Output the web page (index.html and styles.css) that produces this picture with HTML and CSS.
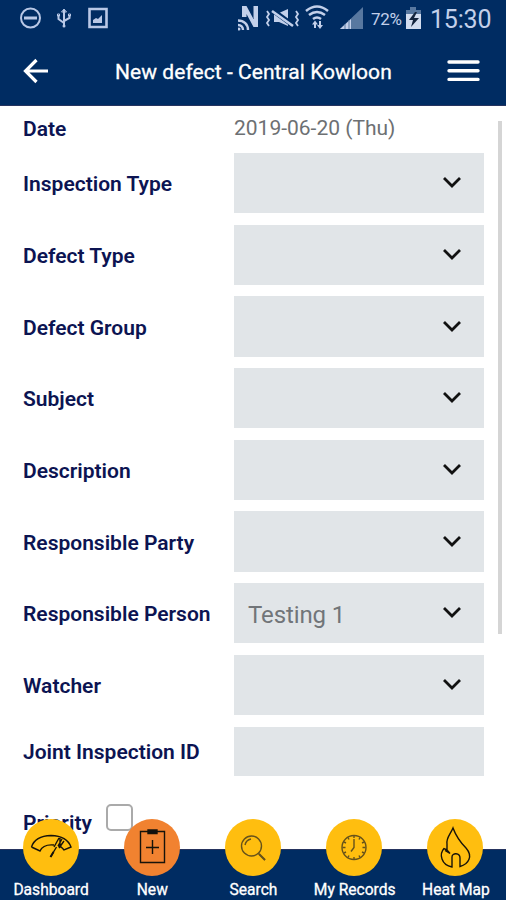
FILE: index.html
```html
<!DOCTYPE html>
<html lang="en">
<head>
<meta charset="utf-8">
<title>New defect</title>
<link rel="stylesheet" href="styles.css">
</head>
<body>
<div class="app">
  <header class="header">
    <div class="status">
      <svg class="status-left" width="90" height="36" viewBox="0 0 90 36" fill="none" stroke="#b9c8e6" stroke-width="2">
        <circle cx="10.5" cy="18" r="9.5"/><path d="M4 18h13" stroke-width="3"/>
        <path d="M44 10v17M38.500 15v4l5.500 4M49.500 15v3l-5.500 3"/><path d="M41.500 12l2.500-3 2.500 3zM37.500 14h2v2h-2zM48.500 14h2v2h-2z" stroke-width="1"/><circle cx="44" cy="26" r="1.500" fill="#b9c8e6" stroke="none"/>
        <path d="M69.500 9h17v18h-17z" stroke-width="2.600"/><path d="M73 23v-3l3-2 2 1 4-4v8z" fill="#b9c8e6" stroke="none"/>
      </svg>
      <svg class="status-right" width="128" height="36" viewBox="0 0 128 36" fill="none" stroke="#c3d0ea">
        <path d="M4 17V6h4.500l7 13V6h4.500v21h-4.500L8.500 14v3z" fill="#c3d0ea" stroke="none"/>
        <path d="M0 20.500c6 0 10 4 10 9.500M0 25c3 0 5 2 5 5" stroke-width="2.400"/><circle cx="1" cy="29" r="1.500" fill="#c3d0ea" stroke="none"/>
        <path d="M36 13h5l9-4v17l-9-4h-5z" fill="#c3d0ea" stroke="none"/>
        <path d="M33 9l23 17" stroke="#002c62" stroke-width="5"/><path d="M34 11l21 15" stroke-width="2.600"/>
        <path d="M29 11l2 3-2 3 2 3-2 3 2 3M58 11l2 3-2 3 2 3-2 3 2 3" stroke-width="1.800"/>
        <path d="M68 11q11-9 22 0M71 15q8-6 16 0M75 19q4-3 8 0" stroke-width="2.500"/>
        <path d="M77 28v-6M82 21v6" stroke-width="2"/><path d="M74 24.500l3-4 3 4zM79 25l3 4 3-4z" fill="#c3d0ea" stroke="none"/>
        <path d="M125 7v22h-23z" fill="#5878a0" stroke="none"/><path d="M102 29l11-10v10z" fill="#c3d0ea" stroke="none"/><path d="M107 24v5M111 20v9" stroke="#5878a0"/>
      </svg>
      <span class="battery-text">72%</span>
      <svg class="battery" width="15" height="22" viewBox="0 0 15 22"><path d="M4 0h6v3h5v4H0V3h4z" fill="#5878a0"/><path d="M0 7h15v15H0z" fill="#d3ddef"/><path d="M9 5l-6 8h4l-2 7 8-9H8l3-6z" fill="#14243d"/></svg>
      <span class="clock">15:30</span>
    </div>
    <div class="toolbar">
      <svg class="back" width="26" height="26" viewBox="0 0 26 26" fill="none" stroke="#fff" stroke-width="3.200"><path d="M13.500 2L2.500 13l11 11M2.500 13H25"/></svg>
      <h1 class="title">New defect - Central Kowloon</h1>
      <svg class="menu" width="33" height="22" viewBox="0 0 33 22" stroke="#fff" stroke-width="3.400" stroke-linecap="round"><path d="M2 2h29M2 10.700h29M2 19.400h29"/></svg>
    </div>
  </header>
  <main class="form">
    <div class="row date"><span class="label">Date</span><span class="value">2019-06-20 (Thu)</span></div>
    <div class="row"><span class="label">Inspection Type</span><div class="field"><svg class="chev" viewBox="0 0 20 13"><path d="M2 2l8 8 8-8"/></svg></div></div>
    <div class="row"><span class="label">Defect Type</span><div class="field"><svg class="chev" viewBox="0 0 20 13"><path d="M2 2l8 8 8-8"/></svg></div></div>
    <div class="row"><span class="label">Defect Group</span><div class="field"><svg class="chev" viewBox="0 0 20 13"><path d="M2 2l8 8 8-8"/></svg></div></div>
    <div class="row"><span class="label">Subject</span><div class="field"><svg class="chev" viewBox="0 0 20 13"><path d="M2 2l8 8 8-8"/></svg></div></div>
    <div class="row"><span class="label">Description</span><div class="field"><svg class="chev" viewBox="0 0 20 13"><path d="M2 2l8 8 8-8"/></svg></div></div>
    <div class="row"><span class="label">Responsible Party</span><div class="field"><svg class="chev" viewBox="0 0 20 13"><path d="M2 2l8 8 8-8"/></svg></div></div>
    <div class="row"><span class="label">Responsible Person</span><div class="field"><span class="picked">Testing 1</span><svg class="chev" viewBox="0 0 20 13"><path d="M2 2l8 8 8-8"/></svg></div></div>
    <div class="row"><span class="label">Watcher</span><div class="field"><svg class="chev" viewBox="0 0 20 13"><path d="M2 2l8 8 8-8"/></svg></div></div>
    <div class="row short"><span class="label">Joint Inspection ID</span><div class="field"></div></div>
    <div class="row priority"><span class="label">Priority</span><span class="check"></span></div>
    <div class="scrollbar"></div>
  </main>
  <nav class="nav">
    <div class="tab"><div class="dot"><svg width="56" height="56" viewBox="0 0 56 56"><path d="M8.500 28Q12 17 28 16.500Q44 17 48 28L41 31Q38 27 35 27M8.500 28L17 32Q20 25 31 26M36 19L31 28M39 20L35 27M27.500 38l6-10M37 19v9M41 22l-5 7"/><path d="M27.500 38l3-5" stroke-width="2"/></svg></div><span>Dashboard</span></div>
    <div class="tab active"><div class="dot"><svg width="56" height="56" viewBox="0 0 56 56"><path d="M16.500 12.500h24v31h-24zM28.500 21v14M22 28.500h13"/><path d="M24 11h9v3.500h-9z" fill="#111"/></svg></div><span>New</span></div>
    <div class="tab"><div class="dot light"><svg width="56" height="56" viewBox="0 0 56 56"><circle cx="26.500" cy="27" r="10"/><path d="M20 26q1-5 6-6M33.500 34.500l6.500 6.500"/><path d="M34 35l6 6" stroke-width="2"/></svg></div><span>Search</span></div>
    <div class="tab"><div class="dot light"><svg width="56" height="56" viewBox="0 0 56 56"><circle cx="28" cy="28.500" r="12"/><path d="M28 20v8.500l-3 4M28 17v2M28 38v2M16.500 28.500h3M36.500 28.500h3M22 18.500l1 2M34 18.500l-1 2M18 23l2 1M38 23l-2 1M18 34l2-1M38 34l-2-1M22 38.500l1-2M34 38.500l-1-2"/></svg></div><span>My Records</span></div>
    <div class="tab"><div class="dot"><svg width="56" height="56" viewBox="0 0 56 56"><path d="M26 9C23 16 19 19 20 25V31L17 29.500C12 35 14 46 25 48V38C25 33.500 33 33.500 33 39V47.500C42 45 46 37 39 29C33 23 29 17 26 9ZM20 31l3 3.500-5-3"/></svg></div><span>Heat Map</span></div>
  </nav>
</div>
</body>
</html>
```
FILE: styles.css
```css
* { box-sizing: border-box; }
body { margin: 0; font-family: Roboto, "Liberation Sans", sans-serif; background: #fff; }
svg { display: block; flex: none; }
.app { width: 506px; height: 900px; display: flex; flex-direction: column; overflow: hidden; }
.header { height: 106px; flex: none; background: #002c62; border-bottom: 1px solid #26345f; }
.status { height: 36px; display: flex; align-items: center; padding-left: 20px; color: #c3d0ea; white-space: nowrap; }
.status-right { margin-left: 128px; }
.battery-text { width: 31px; margin-left: 5px; font-size: 17px; letter-spacing: -0.3px; padding-top: 1px; }
.battery { margin-left: 4px; }
.clock { margin-left: 9px; font-size: 25px; letter-spacing: -0.2px; padding-top: 3px; }
.toolbar { height: 69px; display: flex; align-items: center; padding-left: 23px; }
.title { margin: 3px 0 0 66px; width: 278px; color: #fff; font-size: 21px; font-weight: 400; letter-spacing: 0.05px; white-space: nowrap; -webkit-text-stroke: 0.3px #fff; }
.menu { margin-left: 54px; }
.form { flex: 1; min-height: 0; padding-left: 23px; position: relative; overflow: hidden; }
.row { display: flex; align-items: center; height: 60.3px; margin-bottom: 11.4px; white-space: nowrap; }
.date { height: 44px; margin-bottom: 3px; }
.label { width: 211px; flex: none; color: #0c1452; font-size: 21px; font-weight: 600; padding-top: 2px; }
.date .label { padding-top: 1px; }
.value { color: #6d7073; font-size: 21px; }
.field { width: 250px; height: 100%; background: #e1e5e8; display: flex; align-items: center; padding: 0 22px 0 14px; }
.picked { color: #717579; font-size: 24px; letter-spacing: -0.1px; padding-top: 3px; }
.chev { width: 20px; height: 13px; margin-left: auto; margin-bottom: 1px; fill: none; stroke: #111; stroke-width: 2.8; }
.short { height: 49px; }
.priority { height: 70px; }
.priority .label { width: 83px; }
.check { width: 27px; height: 27px; margin-bottom: 9px; border: 2px solid #aaa; border-radius: 5px; }
.scrollbar { position: absolute; right: 4px; top: 15px; width: 4px; height: 513px; background: #d5d5d5; }
.nav { position: relative; height: 51px; flex: none; display: flex; background: #002c62; border-top: 1px solid #26345f; }
.tab { flex: 1 1 0; min-width: 0; display: flex; flex-direction: column; align-items: center; margin-top: -31px; color: #fff; font-size: 15.6px; white-space: nowrap; }
.tab span { margin-top: 4px; padding-left: 1px; line-height: 20px; -webkit-text-stroke: 0.3px #fff; }
.dot { width: 56px; height: 57px; border-radius: 50%; background: #ffbe0f; }
.dot svg { fill: none; stroke: #17130a; stroke-width: 1.4; }
.dot.light svg { stroke: #66521b; }
.active .dot { background: #f18230; }
```
